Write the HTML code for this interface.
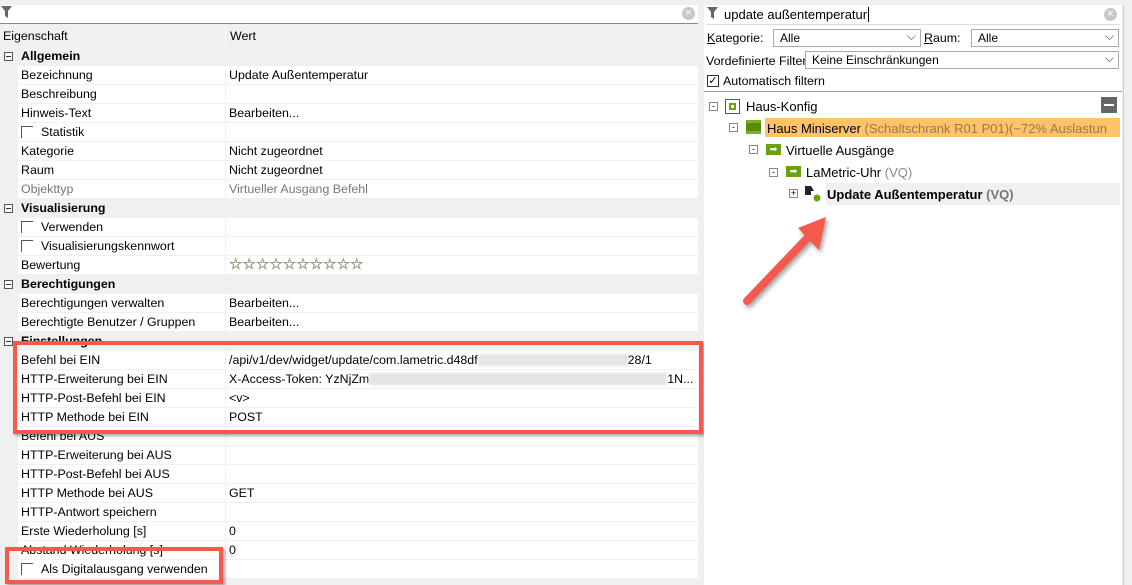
<!DOCTYPE html>
<html style="overflow:hidden;height:585px"><head><meta charset="utf-8"><style>
*{margin:0;padding:0;box-sizing:border-box}
body{width:1132px;height:585px;overflow:hidden;background:#f0f0f0;font-family:"Liberation Sans",sans-serif;font-size:12px;color:#000;position:relative}
.a{position:absolute}
.rows{position:absolute;left:0;top:1px;width:698px;height:580px;overflow:hidden;font-size:12.4px}
.row{position:absolute;left:0;width:698px;height:19px;line-height:18px}
.row .n{position:absolute;left:18px;width:207px;height:19px;background:#fff;border-bottom:1px solid #f0f0f0;padding-left:3px;white-space:nowrap;overflow:hidden}
.row .v{position:absolute;left:226px;width:472px;height:19px;background:#fff;border-bottom:1px solid #f0f0f0;padding-left:3px;white-space:nowrap;overflow:hidden}
.cat{background:#f0f0f0;font-weight:bold}
.cat span{position:absolute;left:21px}
.pm{position:absolute;left:4px;top:5px;width:9px;height:9px;border:1px solid #555;background:#fff}
.pm:after{content:"";position:absolute;left:1px;top:3px;width:5px;height:1px;background:#333}
.cb{display:inline-block;width:12px;height:12px;border-left:1px solid #555;border-top:1px solid #555;vertical-align:-2px;margin-right:8px}
.g{color:#777}
.blur{display:inline-block;height:12px;background:#e4e4e4;vertical-align:-2px;filter:blur(1px)}
.t{position:absolute;white-space:nowrap;font-size:13px}
.sel{border:1px solid #aaa;background:#fff;height:18px;position:absolute;line-height:16px;padding-left:6px}
.sel:after{content:"⌵";position:absolute;right:4px;top:-2px;color:#444}
</style></head><body>
<div class="a" style="left:0;top:5px;width:698px;height:19px;background:#fff;border-bottom:1px solid #888"></div>
<svg class="a" style="left:1px;top:6px" width="12" height="13"><path d="M0 0H11L7 5V12L4 10V5Z" fill="#666"/></svg>
<div class="a" style="left:682px;top:7px;width:13px;height:13px;border-radius:50%;background:#c8c8c8;color:#fff;font-size:11px;line-height:13px;text-align:center">×</div>
<div class="a" style="left:0;top:27px;width:698px;height:20px;background:#f0f0f0"></div>
<div class="a" style="left:3px;top:29px;font-size:12.4px">Eigenschaft</div>
<div class="a" style="left:225px;top:27px;width:1px;height:19px;background:#fff"></div>
<div class="a" style="left:230px;top:29px;font-size:12.4px">Wert</div>

<div class="rows">
<div class="row cat" style="top:46px"><div class="pm"></div><span>Allgemein</span></div>
<div class="row" style="top:65px"><div class="n">Bezeichnung</div><div class="v">Update Außentemperatur</div></div>
<div class="row" style="top:84px"><div class="n">Beschreibung</div><div class="v"></div></div>
<div class="row" style="top:103px"><div class="n">Hinweis-Text</div><div class="v">Bearbeiten...</div></div>
<div class="row" style="top:122px"><div class="n"><span class="cb"></span>Statistik</div><div class="v"></div></div>
<div class="row" style="top:141px"><div class="n">Kategorie</div><div class="v">Nicht zugeordnet</div></div>
<div class="row" style="top:160px"><div class="n">Raum</div><div class="v">Nicht zugeordnet</div></div>
<div class="row" style="top:179px"><div class="n g">Objekttyp</div><div class="v g">Virtueller Ausgang Befehl</div></div>
<div class="row cat" style="top:198px"><div class="pm"></div><span>Visualisierung</span></div>
<div class="row" style="top:217px"><div class="n"><span class="cb"></span>Verwenden</div><div class="v"></div></div>
<div class="row" style="top:236px"><div class="n"><span class="cb"></span>Visualisierungskennwort</div><div class="v"></div></div>
<div class="row" style="top:255px"><div class="n">Bewertung</div><div class="v" style="color:#a09880;letter-spacing:0px;font-size:15px;font-weight:bold">☆☆☆☆☆☆☆☆☆☆</div></div>
<div class="row cat" style="top:274px"><div class="pm"></div><span>Berechtigungen</span></div>
<div class="row" style="top:293px"><div class="n">Berechtigungen verwalten</div><div class="v">Bearbeiten...</div></div>
<div class="row" style="top:312px"><div class="n">Berechtigte Benutzer / Gruppen</div><div class="v">Bearbeiten...</div></div>
<div class="row cat" style="top:331px"><div class="pm"></div><span>Einstellungen</span></div>
<div class="row" style="top:350px"><div class="n">Befehl bei EIN</div><div class="v">/api/v1/dev/widget/update/com.lametric.d48df<span class="blur" style="width:150px"></span>28/1</div></div>
<div class="row" style="top:369px"><div class="n">HTTP-Erweiterung bei EIN</div><div class="v">X-Access-Token: YzNjZm<span class="blur" style="width:298px"></span>1N...</div></div>
<div class="row" style="top:388px"><div class="n">HTTP-Post-Befehl bei EIN</div><div class="v">&lt;v&gt;</div></div>
<div class="row" style="top:407px"><div class="n">HTTP Methode bei EIN</div><div class="v">POST</div></div>
<div class="row" style="top:426px"><div class="n">Befehl bei AUS</div><div class="v"></div></div>
<div class="row" style="top:445px"><div class="n">HTTP-Erweiterung bei AUS</div><div class="v"></div></div>
<div class="row" style="top:464px"><div class="n">HTTP-Post-Befehl bei AUS</div><div class="v"></div></div>
<div class="row" style="top:483px"><div class="n">HTTP Methode bei AUS</div><div class="v">GET</div></div>
<div class="row" style="top:502px"><div class="n">HTTP-Antwort speichern</div><div class="v"></div></div>
<div class="row" style="top:521px"><div class="n">Erste Wiederholung [s]</div><div class="v">0</div></div>
<div class="row" style="top:540px"><div class="n">Abstand Wiederholung [s]</div><div class="v">0</div></div>
<div class="row" style="top:559px"><div class="n"><span class="cb"></span>Als Digitalausgang verwenden</div><div class="v"></div></div>
</div>

<div class="a" style="left:13px;top:341px;width:690px;height:93px;border:4px solid #f5594b;box-shadow:2px 2px 3px rgba(0,0,0,.35)"></div>
<div class="a" style="left:5px;top:547px;width:218px;height:37px;border:4px solid #f5594b;box-shadow:2px 2px 3px rgba(0,0,0,.35)"></div>

<div class="a" style="left:704px;top:5px;width:418px;height:580px;background:#fff"></div>
<div class="a" style="left:1123px;top:5px;width:9px;height:580px;background:#f0f0f0;border-left:1px solid #ccc"></div>
<div class="a" style="left:704px;top:91px;width:418px;height:1px;background:#999"></div>
<svg class="a" style="left:707px;top:7px" width="12" height="13"><path d="M0 0H11L7 5V12L4 10V5Z" fill="#666"/></svg>
<div class="t" style="left:724px;top:7px">update außentemperatur<span style="border-left:1px solid #000;margin-left:1px"></span></div>
<div class="a" style="left:1104px;top:8px;width:13px;height:13px;border-radius:50%;background:#c8c8c8;color:#fff;font-size:11px;line-height:13px;text-align:center">×</div>
<div class="a" style="left:706px;top:24px;width:414px;height:1px;background:#ddd"></div>
<div class="t" style="left:707px;top:31px;font-size:12.4px"><u>K</u>ategorie:</div>
<div class="sel" style="left:773px;top:29px;width:148px">Alle</div>
<div class="t" style="left:924px;top:31px;font-size:12.4px"><u>R</u>aum:</div>
<div class="sel" style="left:971px;top:29px;width:148px">Alle</div>
<div class="t" style="left:706px;top:54px;font-size:12.4px">Vordefinierte Filter</div>
<div class="sel" style="left:805px;top:51px;width:314px">Keine Einschränkungen</div>
<div class="a" style="left:707px;top:75px;width:12px;height:12px;border:1px solid #333;font-size:11px;line-height:10px;text-align:center">✓</div>
<div class="t" style="left:723px;top:74px;font-size:12.4px">Automatisch filtern</div>

<div class="a" style="left:709px;top:102px;width:9px;height:9px;border:1px solid #888;font-size:9px;line-height:6px;text-align:center">-</div>
<div class="a" style="left:725px;top:99px;width:15px;height:15px;border:1px solid #555;background:#fff"><div style="margin:3px 3px;width:7px;height:7px;border:2px solid #6aa011"></div></div>
<div class="t" style="left:746px;top:99px">Haus-Konfig</div>
<div class="a" style="left:1101px;top:97px;width:16px;height:16px;background:#666"><div style="margin:7px 3px;width:10px;height:2px;background:#fff"></div></div>
<div class="a" style="left:765px;top:118px;width:355px;height:19px;background:#fdc36b"></div>
<div class="a" style="left:729px;top:123px;width:9px;height:9px;border:1px solid #888;background:#fff;font-size:9px;line-height:6px;text-align:center">-</div>
<div class="a" style="left:746px;top:120px;width:15px;height:14px;background:#5c8a0c;border-top:3px solid #7bb01a;border-bottom:3px solid #7bb01a"></div>
<div class="t" style="left:767px;top:121px">Haus Miniserver <span style="color:#9a7a44">(Schaltschrank R01 P01)(~72% Auslastun</span></div>
<div class="a" style="left:749px;top:145px;width:9px;height:9px;border:1px solid #888;background:#fff;font-size:9px;line-height:6px;text-align:center">-</div>
<div class="a" style="left:766px;top:144px;width:15px;height:11px;background:#6aa011;color:#fff;font-size:9px;line-height:11px;text-align:center">➡</div>
<div class="t" style="left:786px;top:143px">Virtuelle Ausgänge</div>
<div class="a" style="left:769px;top:168px;width:9px;height:9px;border:1px solid #888;background:#fff;font-size:9px;line-height:6px;text-align:center">-</div>
<div class="a" style="left:786px;top:166px;width:15px;height:11px;background:#6aa011;color:#fff;font-size:9px;line-height:11px;text-align:center">➡</div>
<div class="t" style="left:806px;top:165px">LaMetric-Uhr <span style="color:#888">(VQ)</span></div>
<div class="a" style="left:826px;top:183px;width:294px;height:22px;background:#f0f0f0"></div>
<div class="a" style="left:789px;top:189px;width:9px;height:9px;border:1px solid #888;background:#fff;font-size:9px;line-height:7px;text-align:center">+</div>
<svg class="a" style="left:805px;top:186px" width="16" height="16"><path d="M0 0H6L9 5H6V9H0Z" fill="#222"/><circle cx="12" cy="12" r="3.5" fill="#6aa011"/></svg>
<div class="t" style="left:827px;top:187px;font-weight:bold">Update Außentemperatur <span style="color:#777">(VQ)</span></div>

<svg class="a" style="left:730px;top:205px" width="110" height="110">
<g style="filter:drop-shadow(2px 3px 2px rgba(0,0,0,.35))">
<line x1="17" y1="96" x2="85" y2="25" stroke="#f5594b" stroke-width="8" stroke-linecap="round"/>
<path d="M96 12L68 23L89 45Z" fill="#f5594b"/>
</g></svg>
</body></html>
